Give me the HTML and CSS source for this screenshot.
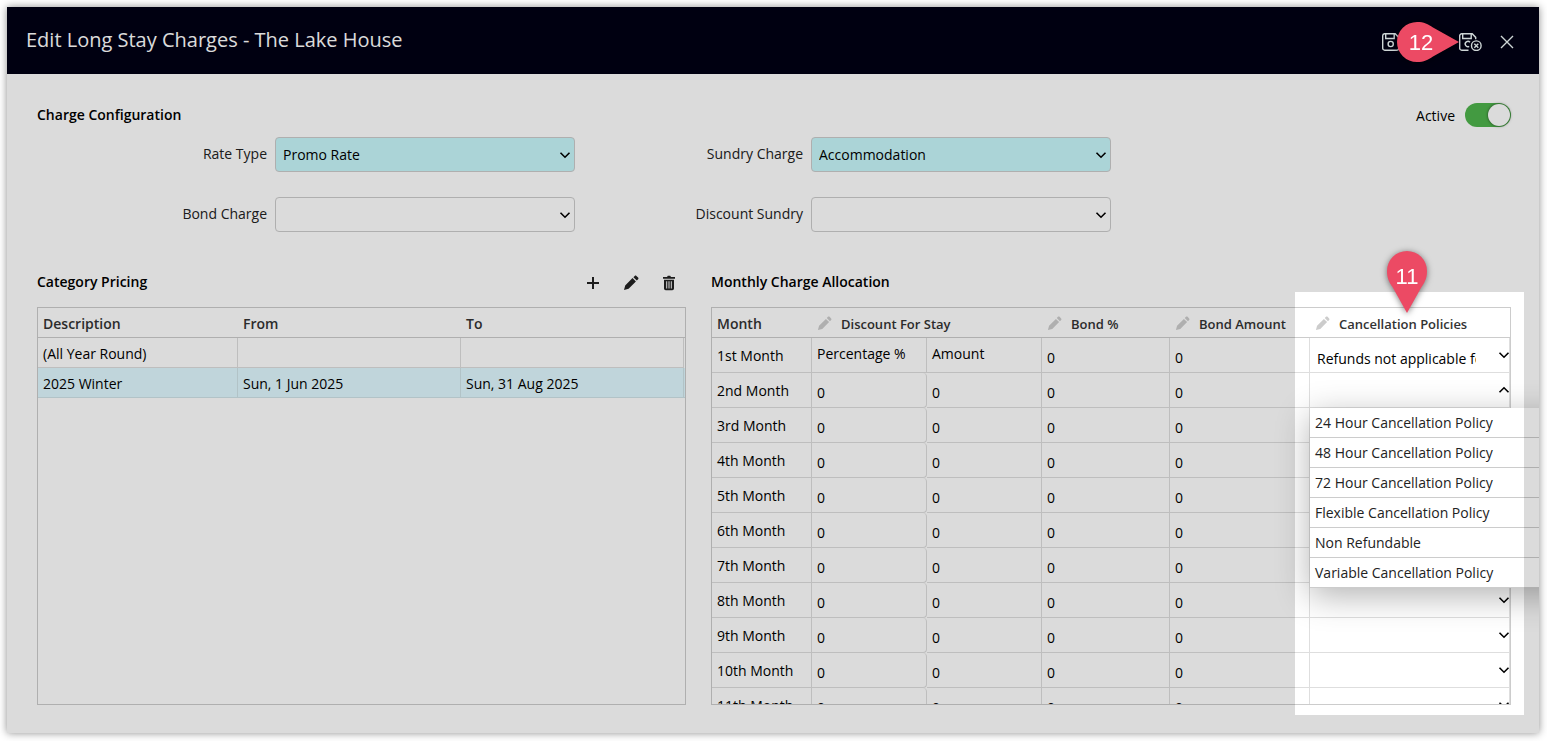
FILE: index.html
```html
<!DOCTYPE html>
<html lang="en">
<head>
<meta charset="utf-8">
<title>Edit Long Stay Charges</title>
<link rel="stylesheet" href="styles.css">
</head>
<body>
<svg class="sprite" aria-hidden="true">
  <symbol id="chevron" viewBox="0 0 12 12"><path d="M1.5 3.7 6 8.2l4.5-4.5" fill="none" stroke="currentColor" stroke-width="1.6"/></symbol>
  <symbol id="pencil" viewBox="0 0 16 16"><path d="M1 15l1.2-4.6 7.3-7.3 3.4 3.4-7.3 7.3zM10.4 2.2l1.3-1.3c.5-.5 1.2-.5 1.7 0l1.7 1.7c.5.5.5 1.2 0 1.7l-1.3 1.3z" fill="currentColor"/></symbol>
</svg>
<main class="dialog">
  <header class="titlebar">
    <h1 class="title">Edit Long Stay Charges - The Lake House</h1>
    <div class="actions">
      <button class="action" aria-label="Save">
        <svg class="save-icon" viewBox="0 0 24 18" fill="none" stroke="currentColor" stroke-width="1.4"><path d="M2.5.8h10.7l3.5 3.6v10.8a2 2 0 0 1-2 2H2.7a2 2 0 0 1-2-2V2.8a2 2 0 0 1 1.800-2z"/><path d="M3.700.8v4.700h8.500V.8"/><circle cx="8.700" cy="11" r="2.600"/></svg>
      </button>
      <button class="action" aria-label="Save and close">
        <svg class="save-icon" viewBox="0 0 24 18" fill="none" stroke="currentColor" stroke-width="1.4"><path d="M9.500 17.200H2.700a2 2 0 0 1-2-2V2.800a2 2 0 0 1 2-2h10.500l3.500 3.600v1.800"/><path d="M3.700.8v4.700h8.500V.8M11 9.300a2.700 2.700 0 1 0-.8 4.100"/><circle cx="17.300" cy="12.700" r="4.800"/><path d="M15.300 10.700l4 4M19.300 10.700l-4 4"/></svg>
      </button>
      <button class="action" aria-label="Close">
        <svg class="close-icon" viewBox="0 0 14 14"><path d="M1 1l12 12M13 1L1 13" stroke="currentColor" stroke-width="1.400"/></svg>
      </button>
      <svg class="pin pin-right" viewBox="0 0 62 40" role="img" aria-label="Step 12"><path d="M20 0C27 0 31 2 36 5.500L62 20 36 34.500C31 38 27 40 20 40A20 20 0 0 1 20 0z"/><text x="24" y="28">12</text></svg>
    </div>
  </header>

  <div class="content">
    <section class="config">
      <div class="config-head">
        <h2 class="heading">Charge Configuration</h2>
        <label class="active">Active <input class="toggle" type="checkbox" role="switch" checked></label>
      </div>
      <div class="fields">
        <label class="field-label" for="rate">Rate Type</label>
        <div class="picker"><select class="select filled" id="rate"><option>Promo Rate</option></select><svg class="chevron"><use href="#chevron"/></svg></div>
        <label class="field-label" for="sundry">Sundry Charge</label>
        <div class="picker"><select class="select filled" id="sundry"><option>Accommodation</option></select><svg class="chevron"><use href="#chevron"/></svg></div>
        <label class="field-label" for="bond">Bond Charge</label>
        <div class="picker"><select class="select" id="bond"><option></option></select><svg class="chevron"><use href="#chevron"/></svg></div>
        <label class="field-label" for="discount">Discount Sundry</label>
        <div class="picker"><select class="select" id="discount"><option></option></select><svg class="chevron"><use href="#chevron"/></svg></div>
      </div>
    </section>

    <div class="panels">
      <section class="panel">
        <div class="panel-head">
          <h2 class="heading">Category Pricing</h2>
          <div class="tools">
            <button class="tool" aria-label="Add"><svg viewBox="0 0 16 16"><path d="M8 2v12M2 8h12" stroke="currentColor" stroke-width="2"/></svg></button>
            <button class="tool" aria-label="Edit"><svg viewBox="0 0 16 16"><use href="#pencil"/></svg></button>
            <button class="tool" aria-label="Delete"><svg viewBox="0 0 16 16"><path d="M2 2h4l.8-1.200h2.400L10 2h4v1.800H2z" fill="currentColor"/><path d="M3 4.800h10V13.500a1.700 1.700 0 0 1-1.700 1.700H4.700A1.700 1.700 0 0 1 3 13.500zM5.200 6.200v7.200h1V6.200zm2.300 0v7.200h1V6.200zm2.300 0v7.200h1V6.200z" fill="currentColor" fill-rule="evenodd"/></svg></button>
          </div>
        </div>
        <div class="frame">
          <div class="scroll">
            <table class="grid pricing">
              <colgroup><col class="w-name"><col class="w-date"><col class="w-date"><col></colgroup>
              <thead><tr><th>Description</th><th>From</th><th>To</th><th></th></tr></thead>
              <tbody>
                <tr><td>(All Year Round)</td><td></td><td></td><td></td></tr>
                <tr class="selected"><td>2025 Winter</td><td>Sun, 1 Jun 2025</td><td>Sun, 31 Aug 2025</td><td></td></tr>
              </tbody>
            </table>
          </div>
        </div>
      </section>

      <section class="panel">
        <div class="panel-head"><h2 class="heading">Monthly Charge Allocation</h2></div>
        <div class="frame">
          <div class="scroll">
            <table class="grid months">
              <colgroup><col class="w-month"><col class="w-part"><col class="w-part"><col class="w-bond"><col class="w-amount"><col></colgroup>
              <thead><tr>
                <th>Month</th>
                <th colspan="2"><span class="edit-head"><svg class="edit"><use href="#pencil"/></svg>Discount For Stay</span></th>
                <th><span class="edit-head"><svg class="edit"><use href="#pencil"/></svg>Bond %</span></th>
                <th><span class="edit-head"><svg class="edit"><use href="#pencil"/></svg>Bond Amount</span></th>
                <th><span class="edit-head"><svg class="edit"><use href="#pencil"/></svg>Cancellation Policies</span></th>
              </tr></thead>
              <tbody id="month-rows"></tbody>
            </table>
          </div>
          <ul class="options" role="listbox" aria-label="Cancellation policy">
            <li class="option" role="option">24 Hour Cancellation Policy</li>
            <li class="option" role="option">48 Hour Cancellation Policy</li>
            <li class="option" role="option">72 Hour Cancellation Policy</li>
            <li class="option" role="option">Flexible Cancellation Policy</li>
            <li class="option" role="option">Non Refundable</li>
            <li class="option" role="option">Variable Cancellation Policy</li>
          </ul>
          <div class="spotlight"></div>
          <svg class="pin pin-down" viewBox="0 0 40 62" role="img" aria-label="Step 11"><path d="M0 20A20 20 0 0 1 40 20C40 27 38 31 34.500 36L20 62 5.500 36C2 31 0 27 0 20z"/><text x="20" y="33">11</text></svg>
        </div>
      </section>
    </div>
  </div>
</main>
<script src="script.js"></script>
</body>
</html>
```
FILE: script.js
```javascript
const months = ["1st", "2nd", "3rd", "4th", "5th", "6th", "7th", "8th", "9th", "10th", "11th"];
const openRow = 1;

const amount = (month, name) =>
  `<td><input class="amount" type="text" value="0" aria-label="${month} ${name}"></td>`;

document.getElementById("month-rows").innerHTML = months.map((ordinal, i) => {
  const month = `${ordinal} Month`;
  const discount = i === 0
    ? `<td class="sub">Percentage %</td><td class="sub">Amount</td>`
    : amount(month, "percentage").replace("<td>", '<td class="rounded">') + amount(month, "discount amount");
  const policy = i === 0 ? "Refunds not applicable for this rate" : "";
  return `<tr><td>${month}</td>${discount}${amount(month, "bond %")}${amount(month, "bond amount")}
    <td class="policy"><div class="picker"><select class="policy-select" aria-label="${month} policy"><option>${policy}</option></select>
    <svg class="chevron${i === openRow ? " up" : ""}"><use href="#chevron"/></svg></div></td></tr>`;
}).join("");
```
FILE: styles.css
```css
* { box-sizing: border-box; }

body {
  margin: 0;
  background: #fff;
  color: #000;
  font: 14px/20px "Open Sans", sans-serif;
}

button, input, select { font: inherit; color: inherit; }
h1, h2 { margin: 0; }
.sprite { display: none; }

.dialog {
  display: flex;
  flex-direction: column;
  height: calc(100vh - 15px);
  min-height: 560px;
  margin: 7px 8px 8px 7px;
  overflow: hidden;
  background: #fff;
  box-shadow: 0 0 8px rgba(0, 0, 0, .45);
}

.titlebar {
  display: flex;
  align-items: center;
  justify-content: space-between;
  height: 67px;
  flex: none;
  padding: 0 25px 0 19px;
  background: #000014;
  color: #fff;
}
.title { font-size: 20px; line-height: 28px; font-weight: 400; padding-bottom: 2px; }

.actions { position: relative; display: flex; align-items: center; padding-top: 2px; }
.action { display: flex; padding: 0; border: 0; background: none; color: #f0fafa; }
.save-icon { width: 24px; height: 18px; }
.action + .action { margin-left: 53px; }
.action + .action + .action { margin-left: 17px; }
.close-icon { width: 14px; height: 14px; }

.pin { position: absolute; z-index: 4; overflow: visible; filter: drop-shadow(0 1px 3px rgba(0, 0, 0, .5)); }
.pin path { fill: #ec4a64; }
.pin text { fill: #fff; font: 22px "Liberation Sans", sans-serif; text-anchor: middle; }
.pin-right { width: 62px; height: 40px; left: 15px; top: -9px; }
.pin-down { width: 40px; height: 62px; right: 83px; top: -57px; }

.content {
  display: flex;
  flex-direction: column;
  flex: 1;
  min-height: 0;
  padding: 28px 28px 28px 30px;
}
.heading { font-size: 14px; line-height: 20px; font-weight: 600; }

.config-head { display: flex; align-items: flex-start; justify-content: space-between; height: 35px; }
.config-head .heading { padding-top: 3px; }
.active { display: flex; gap: 10px; line-height: 28px; }
.toggle {
  appearance: none;
  width: 46px;
  height: 24px;
  margin: 1px 0 0;
  border-radius: 12px;
  background: #4fb44c;
}
.toggle::before {
  content: "";
  display: block;
  width: 22px;
  height: 22px;
  margin: 1px 1px 1px auto;
  border-radius: 50%;
  background: #fff;
  box-shadow: 0 0 3px rgba(0, 0, 0, .6);
}

.fields {
  display: grid;
  grid-template-columns: 238px 300px 236px 300px;
  row-gap: 25px;
}
.field-label { padding: 7px 8px 0 0; text-align: right; color: #222; }
.picker { position: relative; }
.select {
  appearance: none;
  width: 100%;
  height: 35px;
  display: block;
  padding: 0 24px 0 7px;
  border: 1px solid #ccc;
  border-radius: 4px;
  background: #fff;
}
.filled { background: #c7f7fb; }
.chevron {
  position: absolute;
  right: 4px;
  top: 50%;
  width: 12px;
  height: 12px;
  margin-top: -6px;
  pointer-events: none;
}
.up { transform: rotate(180deg); }

.panels {
  display: grid;
  grid-template-columns: minmax(0, 1fr) 800px;
  column-gap: 25px;
  flex: 1;
  min-height: 0;
  padding-top: 38px;
}
.panel { display: flex; flex-direction: column; min-height: 0; }
.panel-head { display: flex; justify-content: space-between; height: 37px; padding-top: 2px; }
.tools { display: flex; gap: 22px; padding: 3px 9px 0 0; height: 19px; }
.tool { padding: 0; border: 0; background: none; color: #222; }
.tool svg { display: block; width: 16px; height: 16px; }

.frame { position: relative; flex: 1; min-height: 0; border: 1px solid #ccc; }
.scroll { height: 100%; overflow: auto; scrollbar-width: none; }

.grid { width: 100%; table-layout: fixed; border-collapse: separate; border-spacing: 0; }
.grid th {
  height: 30px;
  padding: 2px 5px 0;
  border-bottom: 1px solid #ccc;
  text-align: left;
  font-weight: 600;
  color: #333;
  white-space: nowrap;
}
.grid td {
  padding: 2px 5px 0;
  border: 0 solid #dedede;
  border-width: 0 1px 1px 0;
  white-space: nowrap;
}
.pricing td { height: 30px; }
.pricing td:last-child { border-right: 0; }
.pricing tr:not(.selected) td:last-child { border-bottom-color: transparent; }
.selected td { background: #e0f9ff; border-color: #d0e4e8; }
.w-name { width: 200px; }
.w-date { width: 223px; }

.months td { height: 35px; }
.w-month { width: 100px; }
.w-part { width: 115px; }
.w-bond { width: 128px; }
.w-amount { width: 140px; }
.months td.sub { padding-bottom: 2px; padding-top: 0; }
.months td.rounded { border-top-right-radius: 4px; border-bottom-right-radius: 4px; }
.months td.policy { padding: 0; }
.edit-head { display: flex; align-items: center; gap: 9px; font-size: 13px; }
.edit { width: 15px; height: 15px; color: #ccc; }
.amount { display: block; width: 100%; height: 28px; padding: 2px 0 0; border: 0; background: none; }
.policy-select {
  appearance: none;
  display: block;
  width: 100%;
  height: 34px;
  padding: 7px 33px 0 7px;
  border: 0;
  background: none;
}
.policy .chevron { right: -1px; }

.options {
  position: absolute;
  z-index: 1;
  left: 598px;
  top: 100px;
  width: 320px;
  margin: 0;
  padding: 0;
  list-style: none;
  background: #fff;
  box-shadow: 0 8px 32px rgba(0, 0, 0, .3);
}
.option { height: 30px; padding: 5px; border-bottom: 1px solid #ccc; color: #222; }

/* Dims everything in the dialog except the cancellation column. */
.spotlight {
  position: absolute;
  z-index: 2;
  top: -16px;
  right: -14px;
  bottom: -11px;
  width: 229px;
  box-shadow: 0 0 2px 2000px rgba(0, 0, 0, .14);
  pointer-events: none;
}
```
